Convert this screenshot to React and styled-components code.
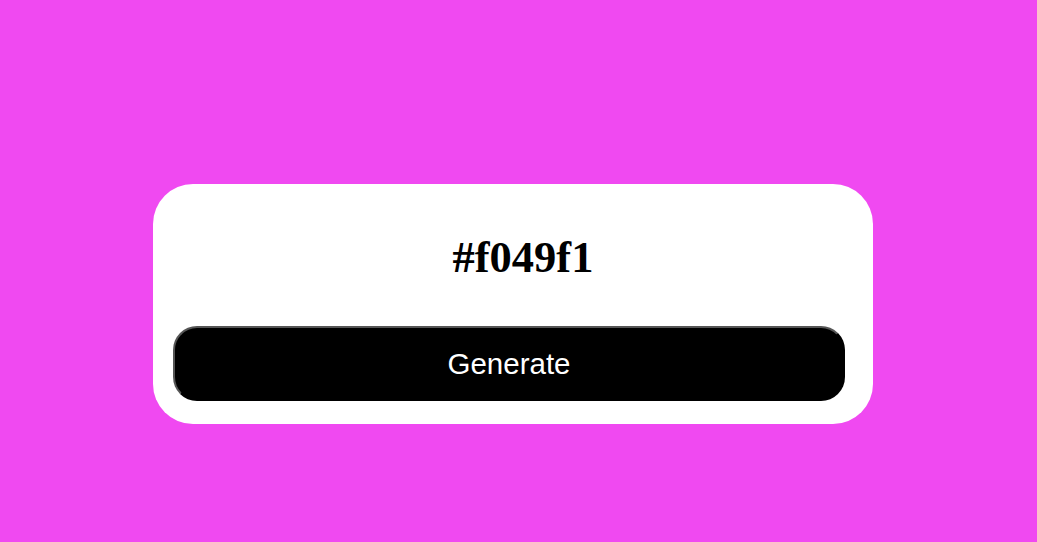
import React from 'react';
import styled, { createGlobalStyle } from 'styled-components';

const GlobalStyle = createGlobalStyle`
  html, body {
    margin: 0;
    padding: 0;
    background: #f049f1;
  }
  body {
    font-family: "Liberation Serif", "Times New Roman", serif;
  }
`;

const Page = styled.div`
  min-height: 542px;
  display: flex;
  justify-content: center;
  align-items: flex-start;
  padding: 184px 11px 0 0;
  box-sizing: border-box;
`;

const Card = styled.div`
  width: 720px;
  height: 240px;
  box-sizing: border-box;
  background: #ffffff;
  border-radius: 40px;
  padding: 0 28px 0 20px;
  display: flex;
  flex-direction: column;
  align-items: stretch;
`;

const ColorCode = styled.h1`
  margin: 48px 0 0;
  padding-left: 28px;
  height: 94px;
  text-align: center;
  font-family: "Liberation Serif", "Times New Roman", serif;
  font-weight: bold;
  font-size: 44.5px;
  line-height: 50px;
  color: #000;
`;

const GenerateButton = styled.button`
  height: 75px;
  width: 100%;
  box-sizing: border-box;
  background: #000;
  color: #fff;
  border: 2px solid;
  border-color: #555 #000 #000 #555;
  border-radius: 24px;
  font-family: "Liberation Sans", Arial, sans-serif;
  font-size: 29.5px;
  cursor: pointer;
`;

const App = () => {
  const color = '#f049f1';
  return (
    <>
      <GlobalStyle />
      <Page>
        <Card>
          <ColorCode>{color}</ColorCode>
          <GenerateButton>Generate</GenerateButton>
        </Card>
      </Page>
    </>
  );
};

export default App;
